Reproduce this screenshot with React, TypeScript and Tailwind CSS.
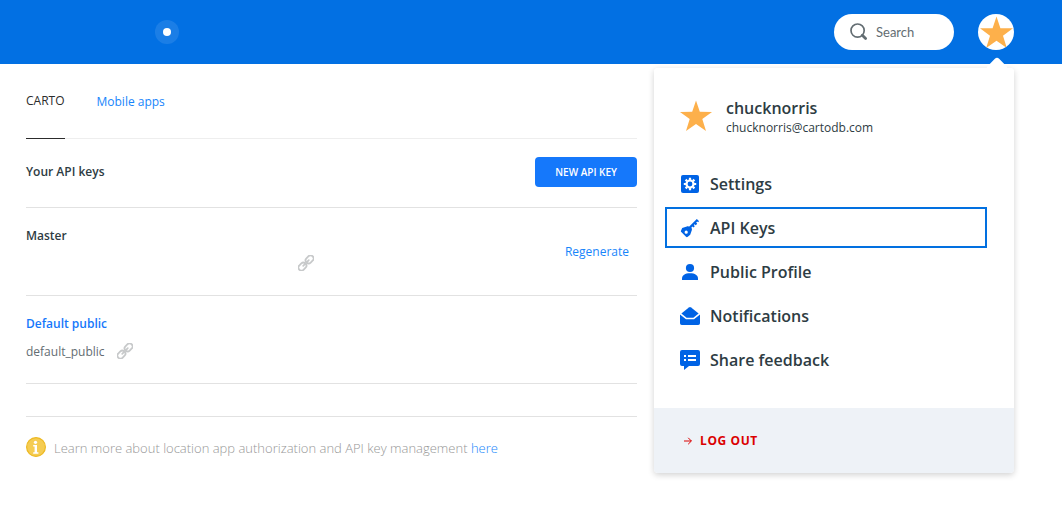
import React from "react";

function Star({ className }: { className: string }) {
  return (
    <svg viewBox="0 0 32 32" className={className} aria-hidden="true">
      <path
        fill="#FDB04B"
        d="M16 0.4L19.8 11.8L32 11.9L22.3 19.1L26 31L16 23.9L6 31L9.7 19.1L0 11.9L12.2 11.8Z"
      />
    </svg>
  );
}

function SearchIcon() {
  return (
    <svg viewBox="0 0 18 18" className="h-[18px] w-[18px] shrink-0" aria-hidden="true">
      <circle cx="7.6" cy="7.6" r="6.6" fill="none" stroke="#636D72" strokeWidth="1.7" />
      <path d="M12.3 12.3L15.6 15.6" stroke="#636D72" strokeWidth="2.8" strokeLinecap="round" />
    </svg>
  );
}

function GearIcon() {
  return (
    <svg viewBox="0 0 20 20" className="h-5 w-5" fill="#0063E5" aria-hidden="true">
      <rect x="1" y="1" width="18" height="18" rx="2" />
      <circle cx="10" cy="10" r="3.5" fill="none" stroke="#fff" strokeWidth="2.2" />
      <path
        d="M10 3.8v2.2M10 14v2.2M3.8 10h2.2M14 10h2.2M5.6 5.6l1.5 1.5M12.9 12.9l1.5 1.5M5.6 14.4l1.5-1.5M12.9 7.1l1.5-1.5"
        stroke="#fff"
        strokeWidth="2.2"
      />
    </svg>
  );
}

function KeyIcon() {
  return (
    <svg viewBox="0 0 20 20" className="h-5 w-5" aria-hidden="true">
      <path
        fill="#0063E5"
        fillRule="evenodd"
        d="M2.2 10.1L6.8 8.4C7.6 8.1 8.4 8.2 9 8.7L15.8 1.9L16.8 1L18.2 2.3L19 3.2L18.1 4.2L17.2 3.6L16.2 4.6L17.2 5.8L15.8 7.2L14.6 6.2L13.8 7L14.8 8.2L13.4 9.4L12.4 8.4L11.3 9.7C12 10.5 12.1 11.3 11.8 12.2L10.2 16.8L7.8 18.8C7.2 19.3 6.5 19.3 6 18.8L1.3 14.1C0.8 13.6 0.8 12.9 1.2 12.3ZM6.2 12.6A1.6 1.6 0 1 0 6.2 15.8A1.6 1.6 0 1 0 6.2 12.6Z"
      />
    </svg>
  );
}

function PersonIcon() {
  return (
    <svg viewBox="0 0 20 20" className="h-5 w-5" fill="#0063E5" aria-hidden="true">
      <circle cx="10" cy="6" r="4.1" />
      <path d="M2 18V16.5C2 13.2 5 11.2 10 11.2S18 13.2 18 16.5V18Z" />
    </svg>
  );
}

function MailIcon() {
  return (
    <svg viewBox="0 0 20 20" className="h-5 w-5" fill="#0063E5" aria-hidden="true">
      <path d="M1.4 7.6L8.9 1.5Q10 0.7 11.1 1.5L18.6 7.6L13.4 11.8H6.6Z" />
      <path d="M0 8.6L6 13.2H14L20 8.6V17.2Q20 19 18.2 19H1.8Q0 19 0 17.2Z" />
    </svg>
  );
}

function FeedbackIcon() {
  return (
    <svg viewBox="0 0 20 20" className="h-5 w-5" aria-hidden="true">
      <path
        fill="#0063E5"
        d="M2 0H18Q20 0 20 2V14Q20 16 18 16H9L4 20V16H2Q0 16 0 14V2Q0 0 2 0Z"
      />
      <path d="M4 6h2M8 6h8M4 10h2M8 10h8" stroke="#fff" strokeWidth="2" />
    </svg>
  );
}

function ChainIcon() {
  return (
    <svg viewBox="0 0 16 16" className="h-4 w-4" aria-hidden="true">
      <g fill="none" stroke="#C7C9CA" strokeWidth="1.8" transform="rotate(-45 8 8)">
        <rect x="-1.4" y="5" width="8.6" height="6" rx="2.8" />
        <rect x="8.8" y="5" width="8.6" height="6" rx="2.8" />
        <path d="M4 8H12" strokeWidth="1.7" strokeLinecap="round" />
      </g>
    </svg>
  );
}

function InfoIcon() {
  return (
    <svg viewBox="0 0 20 20" className="h-5 w-5 shrink-0" aria-hidden="true">
      <circle cx="10" cy="10" r="9.4" fill="#F5CC52" stroke="#EDB923" strokeWidth="1.2" />
      <circle cx="9.5" cy="5.3" r="1.6" fill="#fff" />
      <path fill="#fff" d="M7.2 8H11V15.3H12.4V16.7H7.2V15.3H8.6V9.4H7.2Z" />
    </svg>
  );
}

const menuItems = [
  { label: "Settings", icon: GearIcon },
  { label: "API Keys", icon: KeyIcon, current: true },
  { label: "Public Profile", icon: PersonIcon },
  { label: "Notifications", icon: MailIcon },
  { label: "Share feedback", icon: FeedbackIcon },
];

function UserMenu() {
  return (
    <div className="absolute top-[68px] right-12 z-10 w-[360px] rounded bg-white shadow-[0_2px_6px_rgba(0,0,0,0.18)]">
      <span className="absolute -top-2 right-[9px] h-4 w-4 rotate-45 rounded-[3px] bg-white" />
      <div className="relative rounded-t bg-white px-[11px] pt-7 pb-7 text-[#2E3C43]">
        <div className="flex items-center gap-[14px] pl-[15px]">
          <Star className="h-8 w-8" />
          <div>
            <p className="text-base leading-6 font-semibold">chucknorris</p>
            <p className="text-xs leading-4">chucknorris@cartodb.com</p>
          </div>
        </div>
        <ul className="mt-[27px] flex flex-col gap-[3px] pr-4">
          {menuItems.map(({ label, icon: Icon, current }) => (
            <li key={label}>
              <a
                href="#"
                aria-current={current ? "page" : undefined}
                className={
                  current
                    ? "flex h-[41px] items-center gap-[10px] border-2 border-[#0270E0] pl-[13px] font-semibold"
                    : "flex h-[41px] items-center gap-[10px] border-2 border-transparent pl-[13px] font-semibold"
                }
              >
                <Icon />
                {label}
              </a>
            </li>
          ))}
        </ul>
      </div>
      <div className="rounded-b bg-[#EEF2F7] px-[30px] py-6">
        <a href="#" className="flex items-center gap-2 text-xs leading-[17px] font-bold tracking-wider text-[#DB0000]">
          <svg viewBox="0 0 8 8" className="h-2 w-2" fill="none" stroke="currentColor" aria-hidden="true">
            <path d="M0 4H7.4M4.2 0.8L7.4 4L4.2 7.2" />
          </svg>
          LOG OUT
        </a>
      </div>
    </div>
  );
}

export default function App() {
  return (
    <div className="min-h-screen bg-white font-['Open_Sans',sans-serif]">
      <header className="relative flex h-16 items-center justify-between bg-[#0270E3] pr-12 pl-[155px]">
        <span className="flex h-6 w-6 items-center justify-center rounded-full bg-white/10">
          <span className="h-2 w-2 rounded-full bg-white" />
        </span>
        <div className="flex items-center gap-6">
          <label className="flex h-9 w-[120px] items-center gap-2 rounded-full bg-white px-4">
            <SearchIcon />
            <input
              type="text"
              aria-label="Search"
              placeholder="Search"
              className="w-full min-w-0 bg-transparent pt-0.5 font-[Lato,sans-serif] text-[13px] text-[#636D72] outline-none placeholder:text-[#636D72]"
            />
          </label>
          <button type="button" aria-label="Account" className="flex h-9 w-9 items-center justify-center overflow-hidden rounded-full bg-white">
            <Star className="h-[33px] w-[33px]" />
          </button>
        </div>
        <UserMenu />
      </header>

      <main className="max-w-[637px] pl-[26px] text-xs">
        <nav className="flex h-[75px] gap-8 border-b border-[#EEEEEE]">
          <a href="#" className="-mb-px border-b border-[#2C2C2C] pt-7 leading-[18px] text-[#2C2C2C]">
            CARTO
          </a>
          <a href="#" className="pt-7 leading-5 text-[#1785FB]">
            Mobile apps
          </a>
        </nav>

        <div className="flex items-start justify-between border-b border-[#E2E2E2] pt-[18px] pb-5">
          <h1 className="leading-[30px] font-semibold text-[#2E3C43]">Your API keys</h1>
          <button type="button" className="h-[30px] rounded bg-[#1578FB] px-5 pt-0.5 text-[10px] font-semibold text-white">
            NEW API KEY
          </button>
        </div>

        <ul>
          <li className="flex h-[88px] items-start justify-between border-b border-[#E2E2E2] pt-[18px]">
            <div>
              <h2 className="leading-5 font-semibold text-[#2E3C43]">Master</h2>
              <button type="button" aria-label="Copy master key" className="mt-2 ml-[272px] flex h-5 items-center pb-0.5">
                <ChainIcon />
              </button>
            </div>
            <button type="button" className="pt-4 pr-2 leading-5 text-[#1785FB]">
              Regenerate
            </button>
          </li>
          <li className="flex h-[88px] items-start border-b border-[#E2E2E2] pt-[18px]">
            <div>
              <h2 className="leading-5 font-semibold text-[#1578FB]">
                <a href="#">Default public</a>
              </h2>
              <div className="mt-2 flex h-5 items-center gap-3 text-[#636D72]">
                default_public
                <button type="button" aria-label="Copy default public key" className="pb-0.5">
                  <ChainIcon />
                </button>
              </div>
            </div>
          </li>
        </ul>

        <footer className="mt-8 flex items-start gap-2 border-t border-[#E2E2E2] pt-5">
          <InfoIcon />
          <p className="text-[13px] leading-[22px] font-light text-[#979797]">
            Learn more about location app authorization and API key management{" "}
            <a href="#" className="text-[#1785FB]">
              here
            </a>
          </p>
        </footer>
      </main>
    </div>
  );
}
